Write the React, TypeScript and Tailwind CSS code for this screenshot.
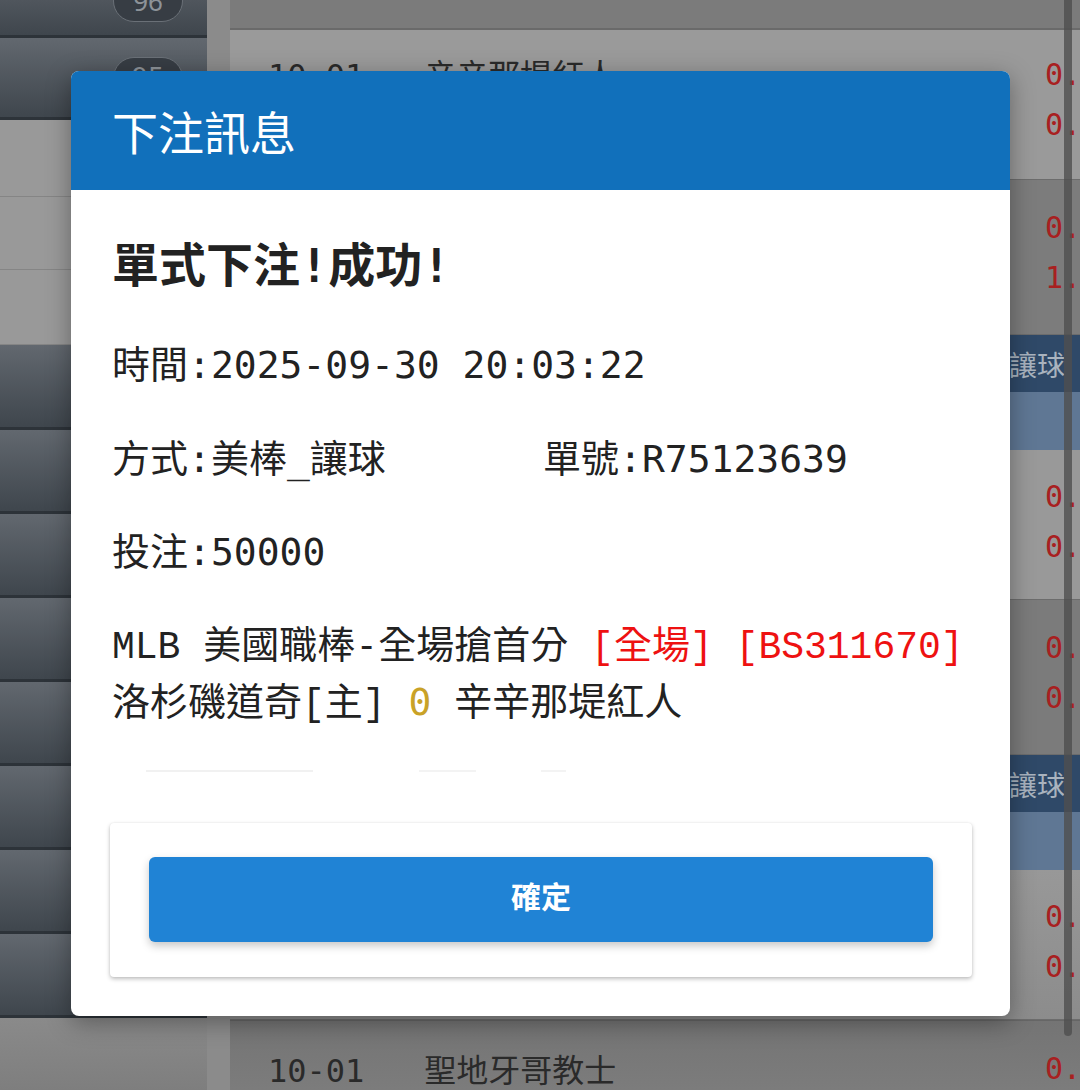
import React from "react";

const mono = "font-['DejaVu_Sans_Mono','Noto_Sans_CJK_TC',monospace]";
const courier = "font-['Liberation_Mono','Noto_Sans_CJK_TC',monospace]";

const DarkRow = ({ h, badge, badgeTop }: { h: number; badge?: string; badgeTop?: number }) => (
  <div
    className="relative shrink-0 bg-linear-to-b from-[#62686f] to-[#3f464d] border-b-[3px] border-[#2d3339]"
    style={{ height: h }}
  >
    {badge && (
      <div
        className="absolute left-[113px] w-[70px] h-[42px] rounded-full bg-[#373d44] border border-[#6a7077] flex items-center justify-center text-[#8d9399] text-[26px] font-['DejaVu_Sans',sans-serif]"
        style={{ top: badgeTop }}
      >
        {badge}
      </div>
    )}
  </div>
);

const LightRow = ({ h }: { h: number }) => (
  <div className="shrink-0 bg-[#999999] border-b border-[#858585]" style={{ height: h }} />
);

const Odds = ({ a, b }: { a: string; b: string }) => (
  <div className={`absolute left-[815px] flex flex-col gap-[20px] text-[30px] leading-[30px] text-[#a82020] ${mono}`}>
    <span>{a}</span>
    <span>{b}</span>
  </div>
);

const GameRow = ({ h, bg, a, b, top, name }: { h: number; bg: string; a: string; b: string; top: number; name?: string }) => (
  <div className={`relative shrink-0 border-b border-[#6c6c6c] ${bg}`} style={{ height: h }}>
    {name && (
      <div className={`absolute left-[38px] top-[22px] flex gap-[60px] text-[32px] text-[#2a2a2a] ${mono}`}>
        <span>10-01</span>
        <span>{name}</span>
      </div>
    )}
    <div className="absolute inset-0" style={{ paddingTop: top }}>
      <Odds a={a} b={b} />
    </div>
  </div>
);

const HeadRow = () => (
  <>
    <div className="shrink-0 h-[57px] bg-[#2f4968] flex items-center justify-end pr-[15px] text-[28px] text-[#a9b3be] font-['Noto_Sans_CJK_TC',sans-serif]">
      讓球
    </div>
    <div className="shrink-0 h-[58px] bg-[#5f7794]" />
  </>
);

const App = () => {
  return (
    <div className="relative w-[1080px] h-[1090px] overflow-hidden flex bg-[#7a7a7a]">
      {/* left list */}
      <div className="w-[207px] shrink-0 flex flex-col bg-[#8f8f8f]">
        <div className="shrink-0 h-[38px] relative bg-linear-to-b from-[#50565d] to-[#3f464d] border-b-[3px] border-[#2d3339]">
          <div className="absolute left-[113px] top-[-20px] w-[70px] h-[42px] rounded-full bg-[#373d44] border border-[#6a7077] flex items-center justify-center text-[#8d9399] text-[26px]">
            96
          </div>
        </div>
        <DarkRow h={82} badge="95" badgeTop={19} />
        <LightRow h={77} />
        <LightRow h={73} />
        <LightRow h={75} />
        <DarkRow h={85} />
        <DarkRow h={84} />
        <DarkRow h={84} />
        <DarkRow h={84} />
        <DarkRow h={84} />
        <DarkRow h={84} />
        <DarkRow h={84} />
        <DarkRow h={84} />
        <div className="flex-1 bg-linear-to-b from-[#8a8a8a] to-[#7e7e7e]" />
      </div>

      <div className="w-[23px] shrink-0 bg-[#8b8b8b]" />

      {/* main table */}
      <div className="flex-1 flex flex-col">
        <div className="shrink-0 h-[30px] bg-[#7b7b7b] border-b-2 border-[#6a6a6a]" />
        <GameRow h={150} bg="bg-[#9a9a9a]" a="0." b="0." top={30} name="辛辛那堤紅人" />
        <GameRow h={155} bg="bg-[#7c7c7c]" a="0." b="1." top={33} />
        <HeadRow />
        <GameRow h={150} bg="bg-[#999999]" a="0." b="0." top={32} />
        <GameRow h={155} bg="bg-[#7b7b7b]" a="0." b="0." top={33} />
        <HeadRow />
        <GameRow h={150} bg="bg-linear-to-b from-[#989898] to-[#8c8c8c]" a="0." b="0." top={32} />
        <div className="relative flex-1 bg-linear-to-b from-[#747474] to-[#7c7c7c] border-t border-[#666]">
          <div className={`absolute left-[38px] top-[26px] flex gap-[60px] text-[32px] text-[#2a2a2a] ${mono}`}>
            <span>10-01</span>
            <span>聖地牙哥教士</span>
          </div>
          <div className={`absolute left-[815px] top-[33px] text-[30px] leading-[30px] text-[#a82020] ${mono}`}>0.</div>
        </div>
      </div>

      {/* scrollbar */}
      <div className="absolute left-[1064px] top-0 w-[8px] h-[1036px] rounded-b-full bg-[#4f4f4f]/80" />

      {/* dialog */}
      <div className="absolute left-[71px] top-[71px] w-[939px] h-[945px] rounded-[8px] bg-white overflow-hidden shadow-[0_6px_24px_rgba(0,0,0,0.35)] flex flex-col">
        <div className="h-[119px] shrink-0 bg-[#1170bb] flex items-center pl-[41px] text-white text-[46px] font-['Noto_Sans_CJK_TC',sans-serif]">
          下注訊息
        </div>
        <div className={`flex-1 flex flex-col pl-[41px] pr-[38px] text-[#222] text-[38px] ${mono}`}>
          <div className="mt-[48px] leading-[56px] text-[47px] font-bold">單式下注!成功!</div>
          <div className="mt-[43px] leading-[56px]">時間:2025-09-30 20:03:22</div>
          <div className="mt-[38px] leading-[56px] flex">
            <span className="w-[431px]">方式:美棒_讓球</span>
            <span>單號:R75123639</span>
          </div>
          <div className="mt-[37px] leading-[56px]">投注:50000</div>
          <div className="mt-[38px] leading-[55px]">
            <div>
              <span className={courier}>MLB</span> 美國職棒-全場搶首分{" "}
              <span className={`text-[#ee1111] ${courier}`}>[全場]</span>{" "}
              <span className={`text-[#ee1111] ${courier}`}>[BS311670]</span>
            </div>
            <div>
              洛杉磯道奇<span className={courier}>[</span>主<span className={courier}>]</span>{" "}
              <span className="text-[#c9a227]">0</span> 辛辛那堤紅人
            </div>
          </div>
          <div className="mt-[28px] ml-[34px] flex items-end">
            <div className="w-[167px] h-[2px] bg-[#f1f1f1]" />
            <div className="ml-[106px] w-[57px] h-[2px] bg-[#f3f3f3] mt-[10px]" />
            <div className="ml-[65px] w-[25px] h-[2px] bg-[#f3f3f3]" />
          </div>
          <div className="mt-[51px] -ml-[2px] h-[154px] rounded-[4px] bg-white shadow-[0_2px_4px_rgba(0,0,0,0.25),0_0_2px_rgba(0,0,0,0.08)] px-[39px] pt-[34px]">
            <button className="w-full h-[85px] pb-[8px] rounded-[6px] bg-[#2083d5] shadow-[0_4px_8px_rgba(0,0,0,0.22)] text-white text-[30px] font-bold font-['Noto_Sans_CJK_TC',sans-serif]">
              確定
            </button>
          </div>
        </div>
      </div>
    </div>
  );
};

export default App;
